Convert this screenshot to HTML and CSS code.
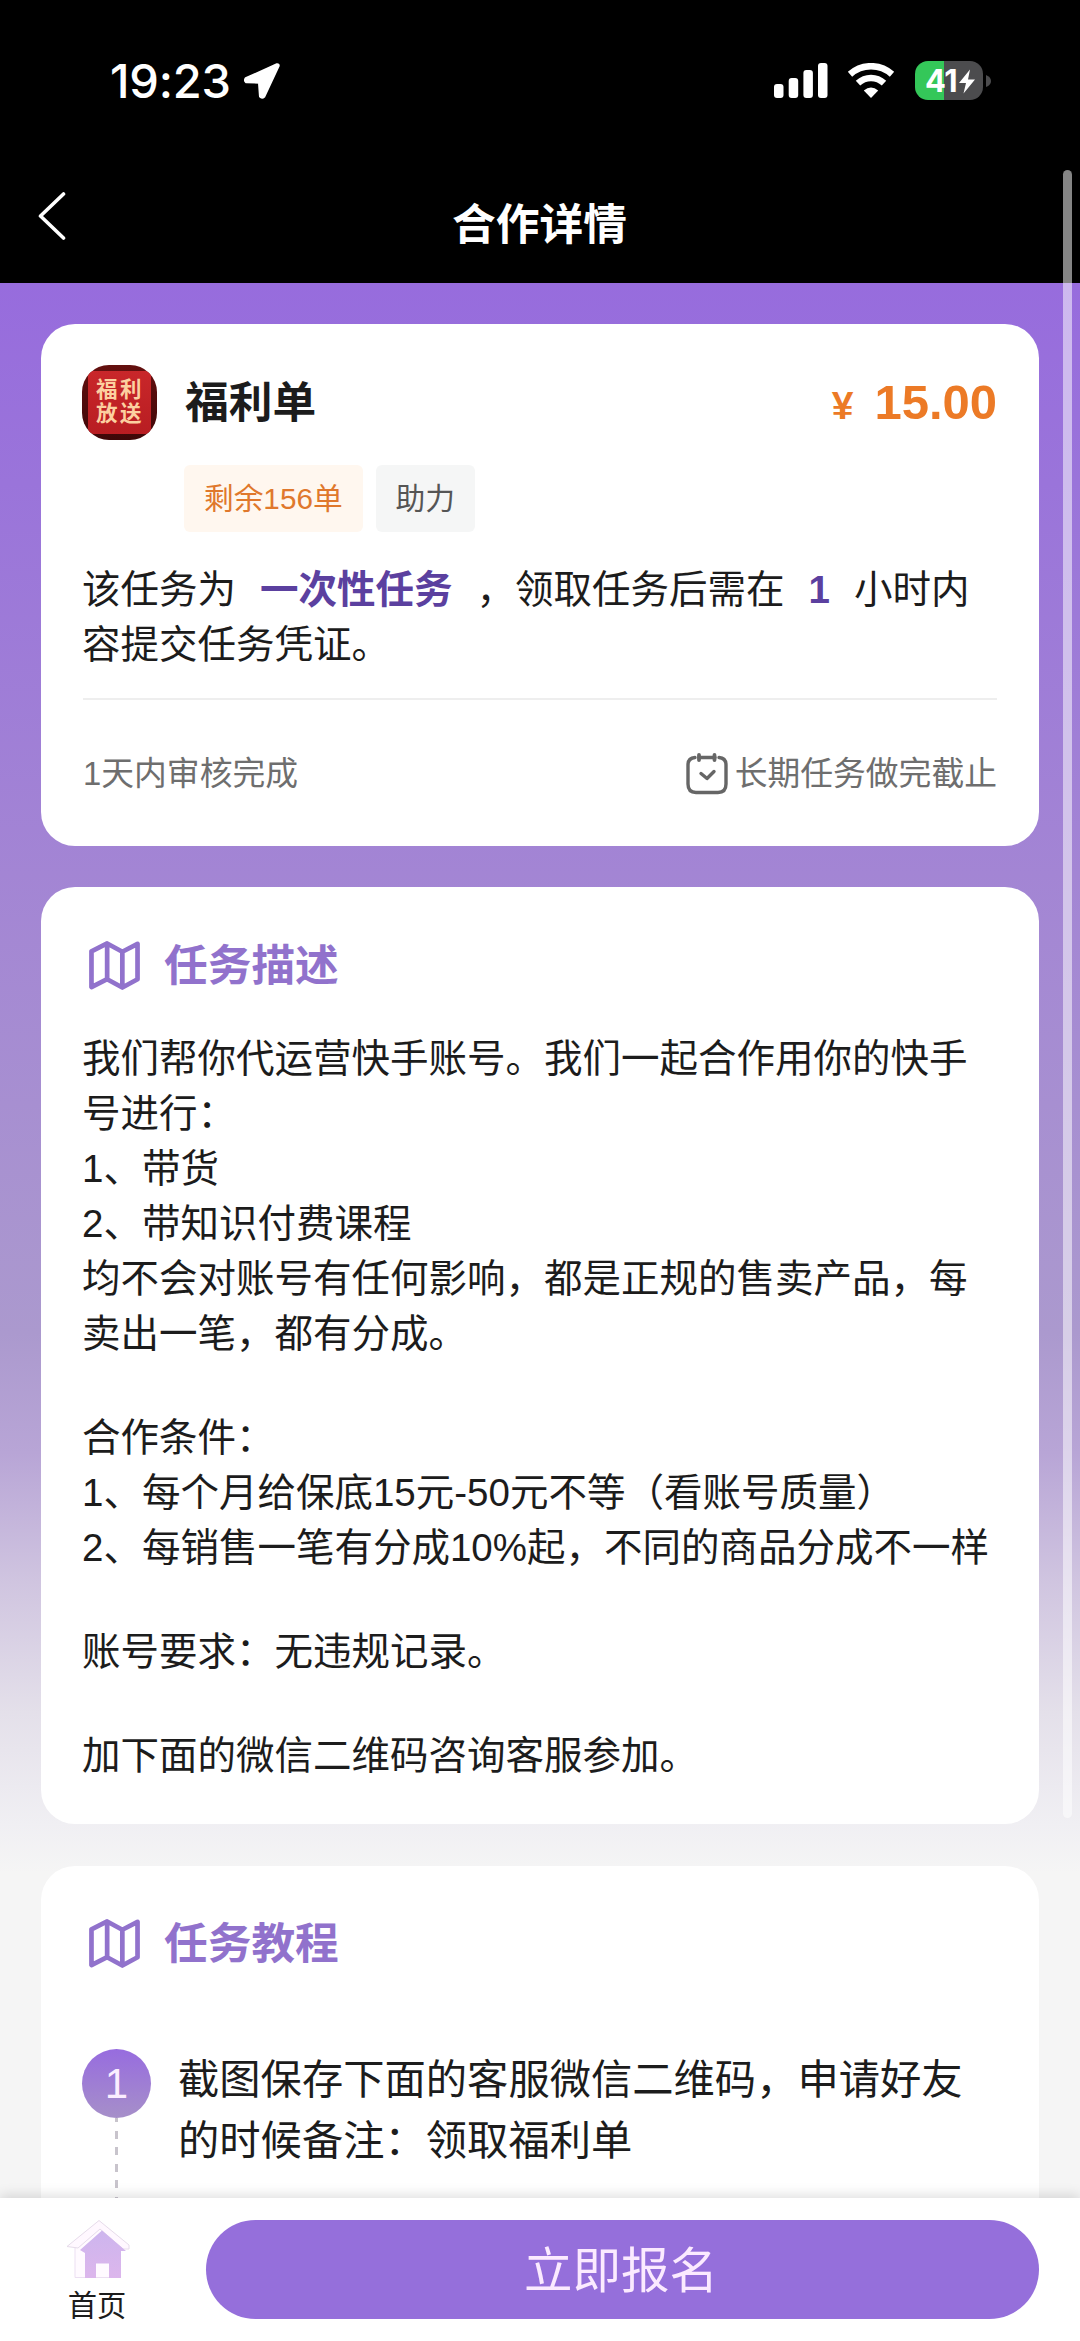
FILE: index.html
```html
<!DOCTYPE html>
<html lang="zh-CN">
<head>
<meta charset="utf-8">
<title>合作详情</title>
<link rel="stylesheet" href="styles.css">
</head>
<body>
<div class="screen">
  <header class="header">
    <div class="status">
      <div class="status-left">
        <span class="time">19:23</span>
        <svg class="location" viewBox="0 0 37 37"><path d="M34 2.5 2.8 16.4Q1.5 18.5 3.2 20L16.2 20.4 17.2 34.5Q19 36.5 21 34.6L35.5 3.8Q35.5 2.3 34 2.5Z" fill="#fff" stroke="#fff" stroke-width="2.5" stroke-linejoin="round"/></svg>
      </div>
      <div class="status-right">
        <svg class="signal" viewBox="0 0 54 35" fill="#fff"><rect x="0" y="21" width="9.5" height="14" rx="3"/><rect x="14.7" y="15" width="9.5" height="20" rx="3"/><rect x="29.4" y="7" width="9.5" height="28" rx="3"/><rect x="44" y="0" width="9.5" height="35" rx="3"/></svg>
        <svg class="wifi" viewBox="0 0 48 35"><path d="M3 11.2C15 .5 33 .5 45 11.2" fill="none" stroke="#fff" stroke-width="6.5"/><path d="M11 20.2C18.5 13.2 29.5 13.2 37 20.2" fill="none" stroke="#fff" stroke-width="6.5"/><path d="M24 35 16.8 27.5Q24 21.5 31.2 27.5Z" fill="#fff"/></svg>
        <div class="battery"><span>41</span><svg viewBox="0 0 16 24"><path d="M11 0 0 13.5H7L4.500 24 16 10H9Z" fill="#fff"/></svg></div>
        <svg class="battery-cap" viewBox="0 0 5 12"><path d="M0 0Q5 2 5 6T0 12Z" fill="#4c4c4e"/></svg>
      </div>
    </div>
    <div class="nav">
      <svg class="back" viewBox="0 0 28 48"><path d="M25.5 2 2.5 24 25.5 46" fill="none" stroke="#fff" stroke-width="3.6" stroke-linecap="round" stroke-linejoin="round"/></svg>
      <h1>合作详情</h1>
    </div>
  </header>

  <main class="content">
    <section class="card summary">
      <div class="summary-head">
        <div class="app-icon"><div>福利<br>放送</div></div>
        <h2>福利单</h2>
        <div class="price"><small>¥</small>15.00</div>
      </div>
      <div class="tags"><span class="tag tag-left">剩余156单</span><span class="tag">助力</span></div>
      <p class="text rule-text">该任务为<b>一次性任务</b>，领取任务后需在<b>1</b>小时内<br>容提交任务凭证。</p>
      <div class="meta">
        <span>1天内审核完成</span>
        <span class="deadline"><svg viewBox="0 0 42 42" fill="none" stroke="#666" stroke-width="3.4" stroke-linecap="round" stroke-linejoin="round"><path d="M9 4.500Q2 5 2 12V31Q2 39.5 10 39.5H32Q40 39.5 40 31V12Q40 5 33 4.5M13 4.5H29"/><path d="M13 2V7M28.5 2V7" stroke-width="3.8"/><path d="M15 20.5 21 25.5 28 18.5"/></svg>长期任务做完截止</span>
      </div>
    </section>

    <section class="card detail">
      <h3><svg viewBox="0 0 52 50" fill="none" stroke="#9172cc" stroke-width="4.8" stroke-linejoin="round"><path d="M2.5 10.5 18.5 2.5 34 11 49.5 3V39L34 47.5 18.5 39 2.5 47ZM18.5 2.5V39M34 11V47.5"/></svg>任务描述</h3>
      <div class="text">
        <p>我们帮你代运营快手账号。我们一起合作用你的快手<br>号进行：<br>1、带货<br>2、带知识付费课程<br>均不会对账号有任何影响，都是正规的售卖产品，每<br>卖出一笔，都有分成。</p>
        <p>合作条件：<br>1、每个月给保底15元-50元不等（看账号质量）<br>2、每销售一笔有分成10%起，不同的商品分成不一样</p>
        <p>账号要求：无违规记录。</p>
        <p>加下面的微信二维码咨询客服参加。</p>
      </div>
    </section>

    <section class="card tutorial">
      <h3><svg viewBox="0 0 52 50" fill="none" stroke="#9172cc" stroke-width="4.8" stroke-linejoin="round"><path d="M2.5 10.5 18.5 2.5 34 11 49.5 3V39L34 47.5 18.5 39 2.5 47ZM18.5 2.5V39M34 11V47.5"/></svg>任务教程</h3>
      <div class="step">
        <div class="step-mark"><span class="step-number">1</span><span class="step-line"></span></div>
        <p>截图保存下面的客服微信二维码，申请好友<br>的时候备注：领取福利单</p>
      </div>
    </section>
  </main>

  <footer class="bottom-bar">
    <a class="home">
      <svg viewBox="0 0 64 60"><defs><linearGradient id="roof" x1="0" y1="0" x2="0" y2="1"><stop offset="0" stop-color="#cdb5ee"/><stop offset="1" stop-color="#dcb6ec"/></linearGradient></defs><path d="M9 29V58.5H54V29L32 8Z" fill="#fffaff" stroke="#ecdff2"/><path d="M1 27.5 33 1.5 63 26V30H57L34 10 12 29Z" fill="#fff8ff" stroke="#e6dcea"/><path d="M14 31 36 11.5 60 32H55V59H43V44.5H30V59H19V34Z" fill="url(#roof)"/></svg>
      <span>首页</span>
    </a>
    <button class="apply">立即报名</button>
  </footer>
  <div class="scrollbar"></div>
</div>
</body>
</html>
```
FILE: styles.css
```css
* { box-sizing: border-box; margin: 0; padding: 0; }
body { font-family: "Liberation Sans", "Noto Sans CJK SC", sans-serif; color: #1c1c1c; }
svg { display: block; flex: none; }
.screen { position: relative; width: 1080px; height: 2341px; overflow: hidden; display: flex; flex-direction: column; background: #f5f5f5; }

.header { flex: none; height: 283px; background: #000; color: #fff; }
.status { height: 161px; padding: 0 89px 0 110px; display: flex; justify-content: space-between; align-items: center; }
.status-left, .status-right { display: flex; align-items: center; }
.time { width: 121px; font: 500 47px/56px Inter, sans-serif; letter-spacing: -0.2px; white-space: nowrap; }
.location { width: 37px; height: 37px; margin-left: 12px; }
.signal { width: 54px; height: 35px; }
.wifi { width: 48px; height: 35px; margin-left: 19px; }
.battery { width: 68px; height: 39px; margin-left: 20px; border-radius: 13px; background: linear-gradient(90deg, #34c759 29px, #4c4c4e 29px); display: flex; align-items: center; justify-content: center; gap: 2px; padding-left: 2px; }
.battery span { font: 700 31px/39px Inter, sans-serif; letter-spacing: -0.5px; }
.battery svg { width: 16px; height: 25px; margin-top: 2px; }
.battery-cap { width: 5px; height: 12px; margin-left: 3px; }
.nav { height: 122px; padding-left: 38px; display: grid; grid-template-columns: 28px 1fr 67px; align-items: center; }
.back { width: 28px; height: 48px; margin-top: -12px; }
.nav h1 { margin-top: 5px; font-size: 43.7px; line-height: 60px; font-weight: 700; text-align: center; }

.content { flex: 1; min-height: 0; overflow: hidden; padding: 41px 41px 0; display: flex; flex-direction: column; gap: 41px; background: linear-gradient(#976cdd 0, #9a74da 200px, #a385d4 590px, #ab99ce 1050px, #b8a5d6 1170px, #d0c5e0 1300px, #e4e0ea 1430px, #f0eff3 1540px, #f5f5f5 1590px); }
.card { flex: none; background: #fff; border-radius: 34px; padding: 0 42px; }
.summary { height: 522px; padding-top: 41px; }
.summary-head { display: flex; align-items: center; height: 75px; margin-left: -1px; }
.app-icon { width: 75px; height: 75px; border-radius: 27px; overflow: hidden; background: linear-gradient(#64100f, #3d0708); padding: 6px; }
.app-icon div { width: 63px; height: 63px; border-radius: 5px; background: linear-gradient(#c9272a, #b81d22); color: #fcd0a0; font-size: 21.5px; line-height: 24px; font-weight: 700; letter-spacing: 2.5px; padding: 7px 0 0 8px; }
.summary h2 { margin-left: 28px; font-size: 43.7px; line-height: 60px; }
.price { margin: 3px 0 0 auto; font-size: 49px; line-height: 60px; font-weight: 700; color: #ec7a26; }
.price small { font-size: 39px; margin-right: 21px; }
.tags { display: flex; gap: 13px; margin: 25px 0 0 101px; }
.tag { height: 67px; padding: 0 20px; border-radius: 6px; background: #f5f6f6; color: #555; font-size: 29.7px; line-height: 68px; }
.tag-left { background: #fff7ef; color: #e0782c; }
.text { margin-left: -1px; font-size: 38.5px; line-height: 55px; white-space: nowrap; }
.rule-text { margin-top: 30px; }
.rule-text b { margin: 0 24px; color: #5b409f; }
.meta { margin-top: 26px; padding-top: 50px; border-top: 2px solid #eee; display: flex; justify-content: space-between; font-size: 32.8px; line-height: 48px; color: #6e6e6e; }
.deadline { display: flex; align-items: center; gap: 7px; }
.deadline svg { width: 42px; height: 42px; margin-left: -1px; }

.card h3 { display: flex; align-items: center; gap: 24px; padding-left: 6px; height: 60px; font-size: 43.7px; line-height: 60px; color: #9172cc; }
.card h3 svg { width: 51px; height: 49px; margin-top: -2px; }
.detail { height: 937px; padding-top: 49px; }
.detail .text { margin-top: 35px; }
.detail p + p { margin-top: 49px; }
.tutorial { flex: 1; min-height: 0; margin-top: 1px; padding-top: 48px; border-radius: 34px 34px 0 0; }
.step { display: flex; margin: 75px 0 0 -1px; gap: 28px; }
.step-mark { display: flex; flex-direction: column; align-items: center; }
.step-number { width: 69px; height: 69px; border-radius: 50%; background: linear-gradient(#976cdf, #a68fc9); color: #fbeeff; font-size: 42px; line-height: 69px; text-align: center; }
.step-line { width: 3px; height: 120px; background: repeating-linear-gradient(#c8c4cc 0 8px, transparent 8px 16.6px); background-position: 0 -4px; }
.step p { margin-left: -1px; padding-top: 1px; font-size: 41.3px; line-height: 60.5px; white-space: nowrap; }

.bottom-bar { flex: none; height: 143px; padding: 22px 41px 0 65px; background: #fff; box-shadow: 0 -3px 12px rgba(0,0,0,.13); display: flex; justify-content: space-between; z-index: 1; }
.home { width: 66px; display: flex; flex-direction: column; align-items: center; }
.home svg { width: 64px; height: 60px; margin-top: -1px; }
.home span { font-size: 29.3px; line-height: 42px; margin: 6px 2px 0 0; }
.apply { width: 833px; height: 99px; padding: 3px 3px 0 0; border: 0; border-radius: 50px; background: #956fdb; color: #fbeaff; font-family: inherit; font-size: 48.5px; line-height: 96px; }
.scrollbar { position: absolute; z-index: 2; right: 8px; top: 170px; width: 9px; height: 1648px; border-radius: 5px; background: rgba(255,255,255,.52); }
```
